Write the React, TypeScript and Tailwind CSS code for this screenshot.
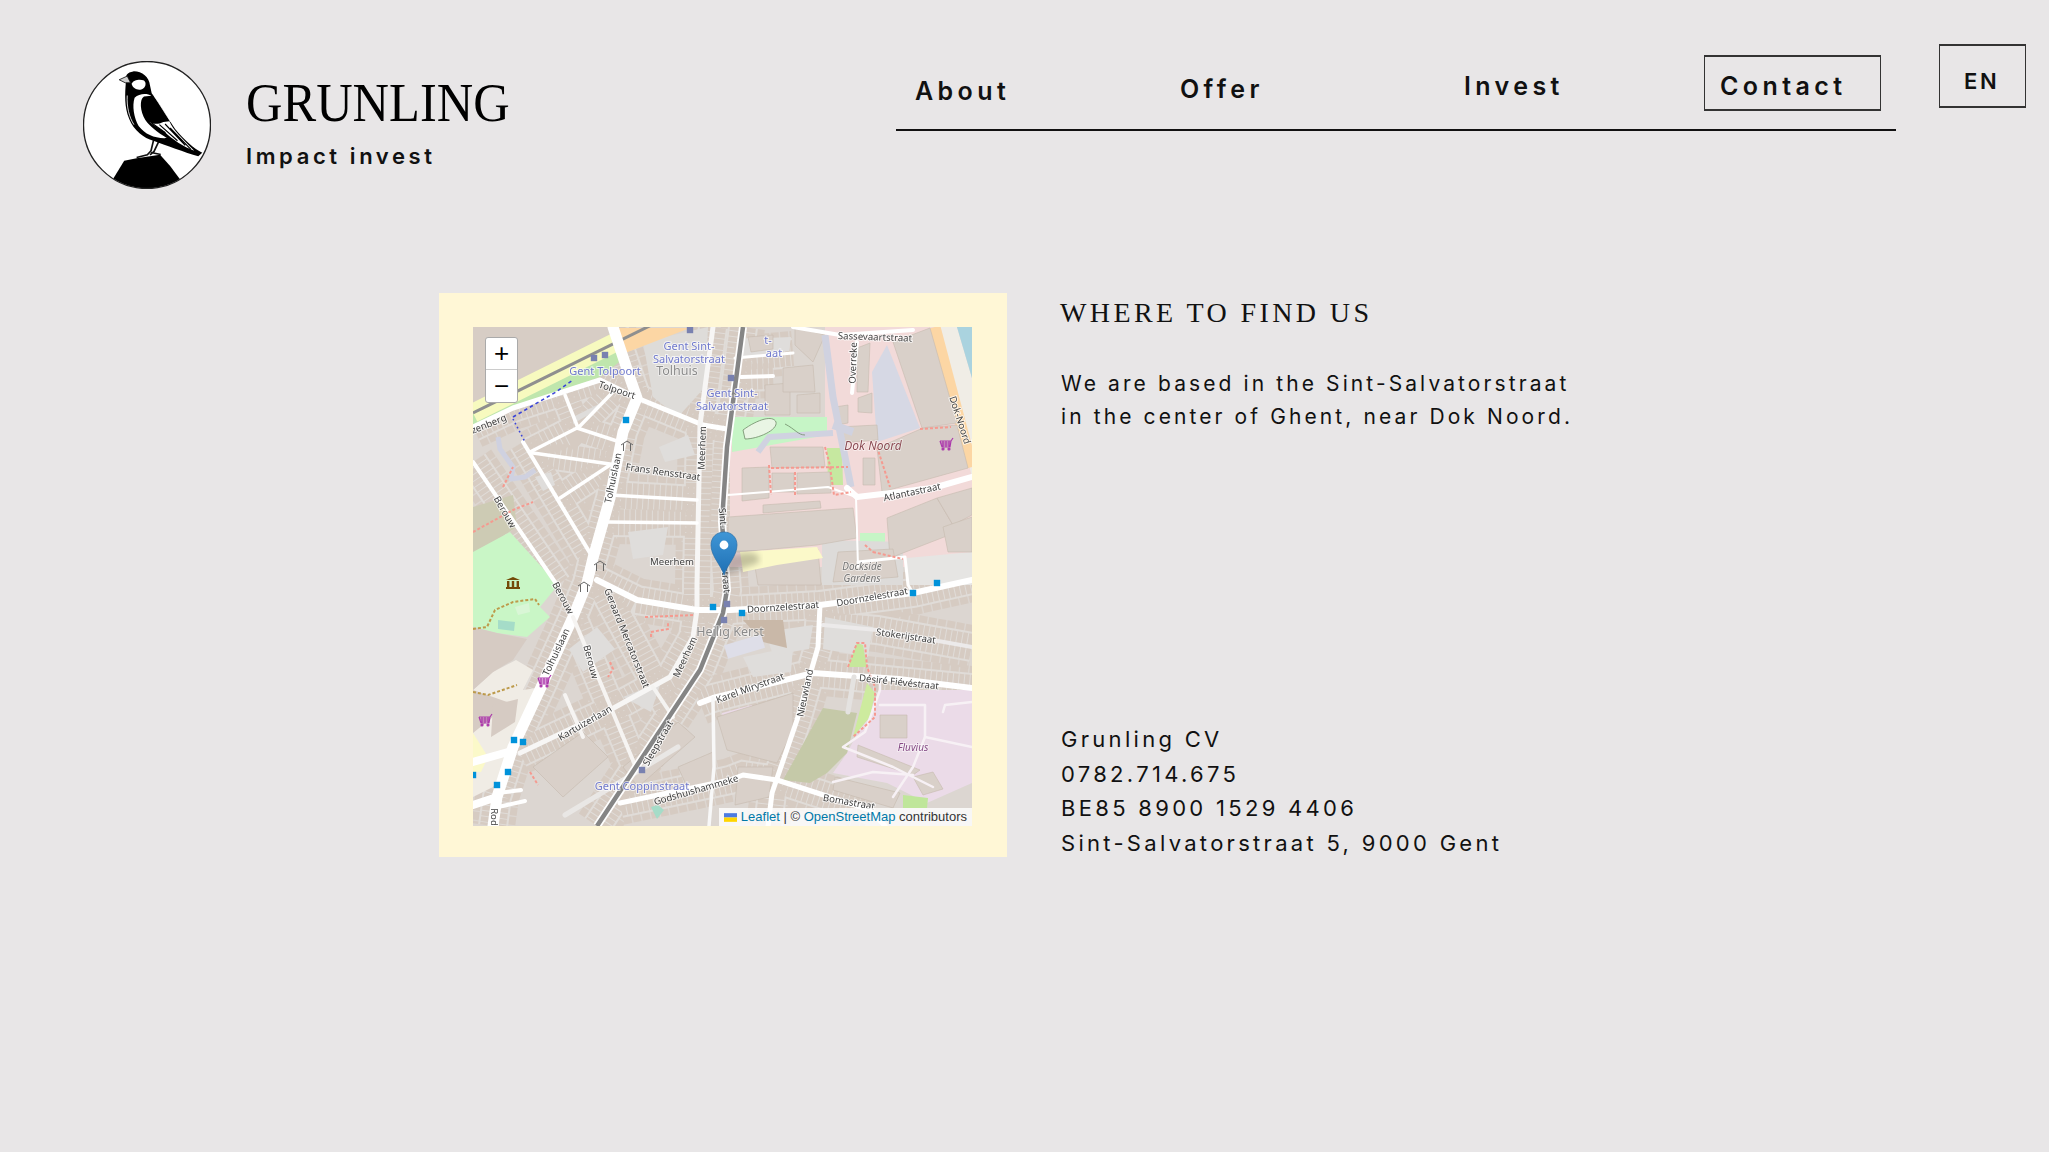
type Poly = [string, string];
const zones: Poly[] = [
  ["0,180 40,168 44,200 0,228", "#cdcbb4"],
  ["0,225 37,205 85,258 67,280 77,290 54,310 24,306 0,300", "#c9f6c6"],
  ["0,363 20,345 43,333 60,343 50,363 70,360 50,410 20,460 0,470", "#f0ece5"],
  ["0,300 24,306 54,312 40,333 20,345 0,363", "#d6cbc3"],
  ["0,363 37,376 0,406", "#d6cbc3"],
  ["20,378 45,372 42,395 18,410", "#d6cbc3"],
  ["0,406 15,430 8,445 0,445", "#fbf9c9"],
  ["257,90 499,90 499,240 257,240", "#f2dad9"],
  ["259,90 354,90 354,108 259,125", "#c6f5c6"],
  ["354,35 375,35 375,66 358,66", "#c6f5c6"],
  ["355,8 375,15 375,35 354,35", "#cdcdb5"],
  ["352,0 462,0 499,90 499,140 400,90 352,90", "#f2dad9"],
  ["399,45 414,18 447,101 404,115", "#d6d8e4"],
  ["462,0 484,0 499,51 499,150", "#f0ede6"],
  ["484,0 499,0 499,51", "#aad3df"],
  ["374,426 407,363 499,363 499,456 454,476 414,456 360,446", "#ebdbe8"],
  ["310,453 350,381 384,386 374,426 354,446 337,456", "#c5c9a8"],
  ["380,410 394,356 402,366 397,390", "#cdeb9e"],
  ["375,340 384,316 390,318 394,340", "#c6e89c"],
  ["354,121 369,121 370,158 355,158", "#c6e8a0"],
  ["387,206 412,206 412,228 387,228", "#c6f5c6"],
  ["349,213 430,215 430,258 349,258", "#dddbd9"],
  ["434,231 499,225 499,258 434,258", "#e6e5e3"],
  ["430,468 455,471 454,481 430,481", "#bfe69a"],
  ["249,386 279,378 279,393 252,408", "#ebdbe8"],
  ["170,15 235,0 232,60 205,90 180,70", "#dedcd9"],
];
const courts: string[] = [
  "100,90 130,75 125,82 100,97","62,150 78,145 82,158 70,164","186,120 215,108 222,128 192,135",
  "155,205 195,200 190,228 160,232","96,322 124,300 142,322 110,345","150,370 188,355 178,385",
  "270,330 320,320 318,345 280,350","352,290 400,300 395,330 350,322","264,12 318,10 316,24 268,30",
  "292,305 340,298 336,322 300,328",
];
const buildings: string[] = [
  "297,120 350,120 352,140 299,141","269,141 296,140 296,171 269,174","299,146 321,146 321,165 299,165",
  "324,146 357,145 358,166 324,167","255,190 380,181 384,211 344,218 267,225 255,225","290,178 347,174 348,181 290,186",
  "404,121 450,101 484,98 495,141 409,165","420,15 457,1 484,96 449,101","365,100 404,98 405,113 367,116",
  "414,191 464,171 484,205 417,231","464,171 499,161 499,188 480,198","362,80 375,78 375,96 364,98",
  "385,71 399,66 399,86 385,85","384,21 397,16 395,65 384,65","292,58 317,56 317,88 292,88",
  "322,0 352,8 340,35 322,18","310,41 340,38 342,65 310,65","324,68 347,66 347,86 324,86",
  "390,131 402,131 402,158 390,158","244,390 320,366 320,403 304,436 254,423","407,388 434,388 434,411 407,411",
  "385,418 447,443 440,448 384,430","362,450 427,466 420,481 360,463","365,225 420,222 425,250 360,255",
  "470,200 499,190 499,225 475,225","280,228 345,222 348,258 285,258","440,450 460,445 470,462 450,468",
  "275,10 300,8 300,22 278,25","60,440 110,405 135,430 90,470","150,440 205,395 222,410 165,460","205,440 240,425 240,455 215,462",
  "265,440 300,440 296,470 262,478",
];
const rows: string[] = [
  "M140 0 L157 51 L164 71 L150 105 L137 171 L120 231 L114 256 L100 290 L70 356 L40 420 L24 470 L20 499",
  "M0 100 L40 81 L127 53 L164 71 L230 98 L254 102",
  "M240 0 L227 98 L224 258 L224 283 L220 310 L197 350 L137 383 L47 426",
  "M0 135 L84 258","M50 115 L120 231","M100 290 L164 443","M127 256 L200 390",
  "M124 253 L164 273 L224 283 L257 283 L347 278 L440 266 L499 253",
  "M60 126 L144 138","M87 171 L137 138","M137 168 L224 173","M135 195 L224 196","M57 125 L104 101 L147 115",
  "M92 68 L105 101 L139 66","M227 376 L240 371 L340 346 L499 361","M347 278 L345 320 L324 393 L299 466 L295 499",
  "M147 476 L257 453 L270 448 L304 453 L397 483","M227 343 L124 499","M270 0 L254 120 L249 195 L254 263 L250 286 L227 343",
  "M350 298 L404 303 L499 320","M262 31 L320 26","M268 50 L300 49",
];
type Road = [string, number, string];
const roads: Road[] = [
  ["M140 0 L157 51 L164 71 L150 105 L137 171 L120 231 L114 256 L100 290 L70 356 L40 420 L24 470 L20 499", 11, "#fff"],
  ["M0 100 L40 81 L127 53 L164 71 L230 98 L254 102", 5, "#fff"],
  ["M240 0 L227 98 L224 258 L224 283 L220 310 L197 350 L137 383 L47 426", 5, "#f7f6f5"],
  ["M0 135 L84 258", 4, "#fff"],
  ["M50 115 L120 231", 4, "#fff"],
  ["M100 290 L164 443", 4, "#f6f4f2"],
  ["M180 360 L200 390", 4, "#f4f3f1"],
  ["M124 253 L164 273 L224 283 L257 283 L347 278 L440 266 L499 253", 6, "#fff"],
  ["M60 126 L144 138", 3.5, "#fff"],
  ["M87 171 L137 138", 3.5, "#fff"],
  ["M137 168 L224 173", 3.5, "#fff"],
  ["M135 195 L224 196", 3.5, "#fff"],
  ["M57 125 L104 101 L147 115", 3.5, "#fff"],
  ["M92 68 L105 101 L139 66", 3.5, "#fff"],
  ["M320 0 L367 8 L440 3", 4, "#fff"],
  ["M384 15 L379 66", 4, "#fff"],
  ["M262 31 L320 26", 3, "#fff"],
  ["M268 50 L300 49", 4, "#fff"],
  ["M374 161 L384 170 L460 161 L499 150", 6, "#fff"],
  ["M350 298 L404 303 L499 320", 4, "#eceaea"],
  ["M227 376 L240 371 L340 346 L426 352 L499 361", 6, "#fff"],
  ["M347 278 L345 320 L324 393 L299 466 L295 499", 5, "#fff"],
  ["M147 476 L257 453 L270 448 L304 453 L397 483 L412 499", 5, "#fff"],
  ["M240 371 L241 440 L236 499", 3.5, "#f8f8f8"],
  ["M255 168 L355 160 L383 170 L385 240", 2, "#fff"],
  ["M385 235 L432 230 L435 258 L440 266", 3, "#fff"],
  ["M0 435 L35 425", 8, "#fff"],
  ["M0 478 L24 470", 8, "#fff"],
  ["M25 466 L48 463", 4, "#fff"],
  ["M25 480 L52 474", 4, "#fff"],
  ["M205 420 L92 488", 5, "#e9e7e5"],
  ["M92 368 L110 410", 4, "#f6f4f2"],
  ["M407 350 L407 363 L392 405 L370 420 L420 440 L460 460", 2.5, "#f7f1f5"],
  ["M407 378 L452 378 L452 410 L440 440 L420 470", 2.5, "#f7f1f5"],
  ["M452 410 L499 420", 2.5, "#f7f1f5"],
  ["M470 385 L472 378 L499 375", 2.5, "#f7f1f5"],
  ["M360 455 L400 445 L440 448", 2.5, "#f7f1f5"],
  ["M381 350 L375 385", 5, "#e4e2e0"],
];
const ped: Road[] = [
  ["M352 8 L360 70 L372 130 L378 160", 7, "#d0d2e0"],
  ["M285 125 L296 110 L360 106", 6, "#d0d2e0"],
  ["M360 98 L380 105", 8, "#d0d2e0"],
  ["M25 110 L27 122 L40 140 L38 152 L52 150 L62 143", 5, "#cfd1e0"],
];
const dashed: [string, string][] = [
  ["M296 138 L298 168 M298 141 L375 140 M322 145 L322 168 M357 140 L361 168 L378 165 M352 120 L358 142", "#f59a90"],
  ["M404 120 L417 160 M447 102 L478 100", "#f59a90"],
  ["M392 218 L400 225 M400 225 L430 232", "#f59a90"],
  ["M375 340 L384 316 L392 316 L394 340 L402 360 L402 390 L380 410", "#f59a90"],
  ["M0 205 L40 183 L60 175 M30 160 L40 140", "#f59a90"],
  ["M172 290 L222 288 M178 310 L178 305 L195 302 L195 295", "#f59a90"],
  ["M137 335 L140 342 L135 350", "#f59a90"],
  ["M57 445 L65 458", "#f59a90"],
  ["M0 302 L14 300 L22 283 L40 275 L62 272 L66 278", "#bd9a4a"],
  ["M0 365 L15 368 L44 358", "#bd9a4a"],
];
const labels: [string, number, number, number][] = [
  ["Tolpoort",144,63,18],["Kluizenberg",8,100,-22],["Meerhem",229,121,-88],["Meerhem",199,235,0],
  ["Tolhuislaan",140,151,-78],["Frans Rensstraat",190,145,8],["Berouw",32,185,60],["Berouw",90,271,62],
  ["Tolhuislaan",83,325,-65],["Berouw",118,335,75],["Geraard Mercatorstraat",154,311,68],["Meerhem",212,330,-65],
  ["Kartuizerlaan",112,396,-30],["Sleepstraat",185,416,-60],["Godshuishammeke",223,463,-16],["Rod",21,490,90],
  ["Karel Mirystraat",277,361,-20],["Nieuwland",332,366,-78],["Désiré Fiévéstraat",426,355,6],["Stokerijstraat",433,309,8],
  ["Doornzelestraat",310,280,-4],["Doornzelestraat",399,270,-10],["Bomastraat",376,475,10],["Atlantastraat",439,165,-12],
  ["Overreke",380,36,-88],["Sassevaartstraat",402,10,2],["Dok-Noord",487,93,72],["Sint-",250,191,85],["straat",253,253,85],
];
const blue: [string, number, number][] = [
  ["Gent Sint-",216,19],["Salvatorstraat",216,32],["Gent Tolpoort",132,44],["Gent Sint-",259,66],["Salvatorstraat",259,79],
  ["t-",295,13],["aat",301,26],["Gent Coppinstraat",169,459],
];
const stops = [[153,93],[240,280],[269,286],[440,266],[464,256],[41,413],[50,415],[35,445],[24,458],[0,448]];
const transit = [[121,31],[132,28],[217,3],[258,51],[254,277],[251,293],[169,443]];

function Cart({ x, y }: { x: number; y: number }) {
  return (
    <g transform={`translate(${x} ${y})`} fill="none" stroke="#ac39ac" strokeWidth="1.2">
      <path d="M-6 -4 H5 L7 -7 M-6 -4 L-4 2 H4 L5 -4 M-5 -2 H5 M-5 0 H4.5 M-3 -4 V2 M0 -4 V2 M3 -4 V2" />
      <circle cx="-3" cy="4" r="1" fill="#ac39ac" />
      <circle cx="3" cy="4" r="1" fill="#ac39ac" />
    </g>
  );
}
function Gate({ x, y }: { x: number; y: number }) {
  return <path transform={`translate(${x} ${y})`} d="M-6 0 L0 -4 L6 0 M-3.5 -1 V6 M3.5 -1 V6" fill="none" stroke="#666" strokeWidth="1" />;
}

function MapDrawing() {
  return (
    <svg viewBox="0 0 499 499" className="block w-full h-full blur-[0.35px] font-['Noto_Sans',sans-serif]">
      <defs>
        <linearGradient id="pin" x1="0" y1="0" x2="0" y2="1">
          <stop offset="0" stopColor="#3f96d6" />
          <stop offset="1" stopColor="#1f70b4" />
        </linearGradient>
        <filter id="sh"><feGaussianBlur stdDeviation="3" /></filter>
      </defs>
      <rect width="499" height="499" fill="#dcd6d1" />
      {rows.map((d, i) => <path key={i} d={d} stroke="#d6cbc2" strokeWidth="44" strokeDasharray="8 1.4" fill="none" />)}
      {rows.map((d, i) => <path key={i} d={d} stroke="#e0dcd8" strokeWidth="30" fill="none" />)}
      {rows.map((d, i) => <path key={i} d={d} stroke="#d6cbc2" strokeWidth="26" strokeDasharray="4.6 1" fill="none" />)}
      {courts.map((p, i) => <polygon key={i} points={p} fill="#dfdddb" />)}
      <polygon points="0,0 144,0 147,25 0,85" fill="#d7cdc5" />
      <polygon points="0,100 0,86 147,18 150,32 127,50 40,81" fill="#bfe6ad" />
      {zones.map(([p, c], i) => <polygon key={i} points={p} fill={c} />)}
      <polygon points="144,1 217,1 147,28" fill="#fcd6a4" />
      <path d="M462 0 L499 140" stroke="#fcd6a4" strokeWidth="11" fill="none" />
      <path d="M0 86 L147 13" stroke="#f7fabf" strokeWidth="19" fill="none" />
      <path d="M0 86 L215 -20" stroke="#8f8f8f" strokeWidth="3" fill="none" />
      {buildings.map((p, i) => <polygon key={i} points={p} fill="#d9d0c9" stroke="#c6baae" strokeWidth="0.6" />)}
      <polygon points="270,293 310,293 314,321 290,315" fill="#c9b8a8" />
      <polygon points="267,225 344,220 350,231 304,238 270,245" fill="#fbf9c9" />
      <path d="M253 325 L290 314" stroke="#dedee8" strokeWidth="14" fill="none" />
      {ped.map(([d, w, c], i) => <path key={i} d={d} stroke={c} strokeWidth={w} fill="none" strokeLinejoin="round" />)}
      {roads.map(([d, w, c], i) => <path key={i} d={d} stroke={c} strokeWidth={w} fill="none" strokeLinejoin="round" strokeLinecap="round" />)}
      {dashed.map(([d, c], i) => <path key={i} d={d} stroke={c} strokeWidth="2" strokeDasharray="3 2" fill="none" />)}
      <path d="M40 90 L83 65 L100 53" stroke="#3b45d8" strokeWidth="1.6" strokeDasharray="3.5 3" fill="none" />
      <path d="M40 92 L52 115" stroke="#3b45d8" strokeWidth="1.6" strokeDasharray="1.5 3" fill="none" />
      <path d="M270 0 L254 120 L249 195 L254 263 L250 286 L227 343 L124 499" stroke="#fff" strokeWidth="8" fill="none" />
      <path d="M270 0 L254 120 L249 195 L254 263 L250 286 L227 343 L124 499" stroke="#858585" strokeWidth="4.5" fill="none" />
      <g fill="#e9f5e4" stroke="#6f8a67" strokeWidth="0.8">
        <path d="M270 103 C285 92 300 88 303 95 C305 103 285 112 272 112Z" />
        <path d="M312 97 C322 102 325 108 332 108" fill="none" />
      </g>
      <g fill="#a5dcc8"><polygon points="25,293 42,295 41,304 25,302" /><polygon points="42,280 56,276 57,285 45,288" fill="#d9f6d6" /><polygon points="178,480 185,478 191,483 184,492" /></g>
      {stops.map(([x, y], i) => <rect key={i} x={x - 3.2} y={y - 3.2} width="6.4" height="6.4" fill="#0092da" />)}
      {transit.map(([x, y], i) => <rect key={i} x={x - 3.2} y={y - 3.2} width="6.4" height="6.4" fill="#7981b0" />)}
      <Gate x={154} y={118} /><Gate x={127} y={238} /><Gate x={111} y={259} />
      <Cart x={473} y={118} /><Cart x={71} y={355} /><Cart x={12} y={394} />
      <g transform="translate(40 256)" fill="#734a08">
        <path d="M-7 -3 L0 -6 L7 -3Z" />
        <rect x="-6" y="-2" width="2.4" height="6" /><rect x="-1.2" y="-2" width="2.4" height="6" /><rect x="3.6" y="-2" width="2.4" height="6" />
        <rect x="-7" y="4" width="14" height="2" />
      </g>
      <g fontSize="9.6" fill="#3f3f3f" textAnchor="middle" stroke="#ffffff" strokeWidth="2" strokeOpacity="0.75" paintOrder="stroke">
        {labels.map(([t, x, y, r], i) => (
          <text key={i} x={x} y={y} dy="3.3" transform={`rotate(${r} ${x} ${y})`}>{t}</text>
        ))}
      </g>
      <g fontSize="11" fill="#7079cc" textAnchor="middle" stroke="#ffffff" strokeWidth="2" strokeOpacity="0.7" paintOrder="stroke">
        {blue.map(([t, x, y], i) => <text key={i} x={x} y={y} dy="3.5">{t}</text>)}
      </g>
      <g textAnchor="middle" stroke="#ffffff" strokeWidth="1.6" strokeOpacity="0.6" paintOrder="stroke">
        <text x="204" y="48" fontSize="12.5" fill="#8a8a8a">Tolhuis</text>
        <text x="257" y="309" fontSize="12.5" fill="#8a8a8a">Heilig Kerst</text>
        <text x="400" y="123" fontSize="12" fontStyle="italic" fill="#8b4a52">Dok Noord</text>
        <text x="389" y="243" fontSize="10" fontStyle="italic" fill="#737373">Dockside</text>
        <text x="389" y="255" fontSize="10" fontStyle="italic" fill="#737373">Gardens</text>
        <text x="440" y="424" fontSize="10" fontStyle="italic" fill="#854b85">Fluvius</text>
      </g>
      <path d="M251 248 L285 236 C290 228 280 224 270 226 L255 228Z" fill="#000" opacity="0.22" filter="url(#sh)" />
      <path d="M251 248 C248 238 238 229 238 218 C238 210 244 205 251 205 C258 205 264 210 264 218 C264 229 254 238 251 248Z" fill="url(#pin)" stroke="#2a6fa8" strokeWidth="0.7" />
      <circle cx="251" cy="218" r="4.4" fill="#fff" />
    </svg>
  );
}

function Bird() {
  return (
    <svg viewBox="40 32 382 382" className="block w-[128px] h-[128px] shrink-0">
      <defs><clipPath id="cc"><circle cx="231" cy="223" r="189" /></clipPath></defs>
      <circle cx="231" cy="223" r="189" fill="#fff" />
      <path d="M120 400 L163 330 L200 322 L270 312 L300 345 L335 392 L260 425 L170 425Z" fill="#000" clipPath="url(#cc)" />
      <circle cx="231" cy="223" r="189.5" fill="none" stroke="#222" strokeWidth="4" />
      <path d="M252 262 L243 300 L232 312 L200 320 M243 305 L272 311 M268 268 L252 302 L240 312" stroke="#111" strokeWidth="5" fill="none" />
      <path d="M168 95 C165 130 163 170 178 205 C192 240 222 262 250 270 C285 282 345 306 384 316 L396 306 C372 294 342 268 315 235 C295 205 270 160 245 128 L240 105 C238 80 215 62 190 63 C172 65 165 75 168 95Z" fill="#000" />
      <path d="M148 88 L172 77 L182 97 L166 97Z" fill="#cfcfcf" stroke="#111" strokeWidth="2.5" />
      <path d="M185 100 C190 88 210 85 222 90 C230 96 228 112 214 117 C200 120 188 112 185 100Z" fill="#fff" />
      <path d="M194 142 C208 128 232 128 244 136 L222 138 C208 146 210 182 226 208 C240 228 262 244 290 262 C256 264 226 252 206 226 C192 202 186 166 194 142Z" fill="#fff" />
      <path d="M232 210 C250 222 262 222 280 214 L298 212 C308 238 335 262 372 300 C340 288 306 266 284 244Z" fill="#fff" />
      <path d="M244 216 L286 246 M268 222 L322 270 M285 220 L345 284 M300 232 L362 296" stroke="#000" strokeWidth="3.5" fill="none" />
      <path d="M172 135 C170 170 178 200 192 222" stroke="#fff" strokeWidth="2.5" fill="none" />
      <path d="M252 136 C268 160 286 190 302 214" stroke="#fff" strokeWidth="2" fill="none" />
    </svg>
  );
}

export default function App() {
  return (
    <div className="min-h-[1152px] bg-[#e8e6e7] text-[#111] font-['Inter',sans-serif] overflow-hidden">
      <header className="flex items-start h-[293px]">
        <div className="flex ml-[83px] mt-[61px] w-[813px]">
          <Bird />
          <div className="ml-[35px]">
            <div className="mt-[12px] font-['Liberation_Serif',serif] text-[54px] leading-[60px] whitespace-nowrap origin-left scale-x-[0.935] text-black">GRUNLING</div>
            <div className="mt-[9px] text-[22px] leading-[28px] font-semibold tracking-[3.6px]">Impact invest</div>
          </div>
        </div>
        <nav className="flex items-start w-[1000px] h-[131px] border-b-2 border-[#111] text-[25px] leading-[30px] font-semibold tracking-[4.4px]">
          <a className="ml-[19px] mt-[76px] w-[265px]">About</a>
          <a className="mt-[74px] w-[284px]">Offer</a>
          <a className="mt-[71px] w-[240px]">Invest</a>
          <a className="mt-[55px] w-[177px] h-[56px] pl-[15px] pt-[14px] border-x border-y-2 border-[#333]">Contact</a>
        </nav>
        <a className="ml-[43px] mt-[44px] w-[87px] h-[64px] pl-[24px] pt-[21px] border-x border-y-2 border-[#333] text-[22px] leading-[28px] font-semibold tracking-[2.6px]">EN</a>
      </header>
      <main className="flex items-stretch ml-[439px]">
        <div className="w-[568px] h-[564px] bg-[#fff7d6] pl-[34px] pt-[34px]">
          <div className="relative w-[499px] h-[499px] overflow-hidden">
            <MapDrawing />
            <div className="absolute left-[12px] top-[10px] w-[33px] rounded-[3px] border border-[#aaa] bg-white text-black font-['Liberation_Sans',sans-serif]">
              <div className="h-[32px] flex items-center justify-center text-[26px] font-normal border-b border-[#ccc]">+</div>
              <div className="h-[32px] flex items-center justify-center text-[26px] font-normal">−</div>
            </div>
            <div className="absolute right-0 bottom-0 h-[18px] flex items-center gap-[4px] pl-[5px] pr-[5px] bg-white/80 text-[13px] text-[#333] font-['Liberation_Sans',sans-serif]">
              <svg viewBox="0 0 12 8" className="w-[13px] h-[9px]"><rect width="12" height="4" fill="#4C7BE1" /><rect y="4" width="12" height="4" fill="#FFD500" /></svg>
              <span><span className="text-[#0078A8]">Leaflet</span> | © <span className="text-[#0078A8]">OpenStreetMap</span> contributors</span>
            </div>
          </div>
        </div>
        <div className="ml-[53px] flex flex-col">
          <h1 className="mt-[2px] font-['Liberation_Serif',serif] font-normal text-[28px] leading-[36px] tracking-[3.4px]">WHERE TO FIND US</h1>
          <p className="mt-[36px] ml-[1px] text-[21px] leading-[33px] tracking-[3.1px] whitespace-pre-line">{"We are based in the Sint-Salvatorstraat\nin the center of Ghent, near Dok Noord."}</p>
          <p className="mt-[289px] ml-[1px] text-[22px] leading-[34.7px] tracking-[3.3px] whitespace-pre-line">{"Grunling CV\n0782.714.675\nBE85 8900 1529 4406\nSint-Salvatorstraat 5, 9000 Gent"}</p>
        </div>
      </main>
    </div>
  );
}
